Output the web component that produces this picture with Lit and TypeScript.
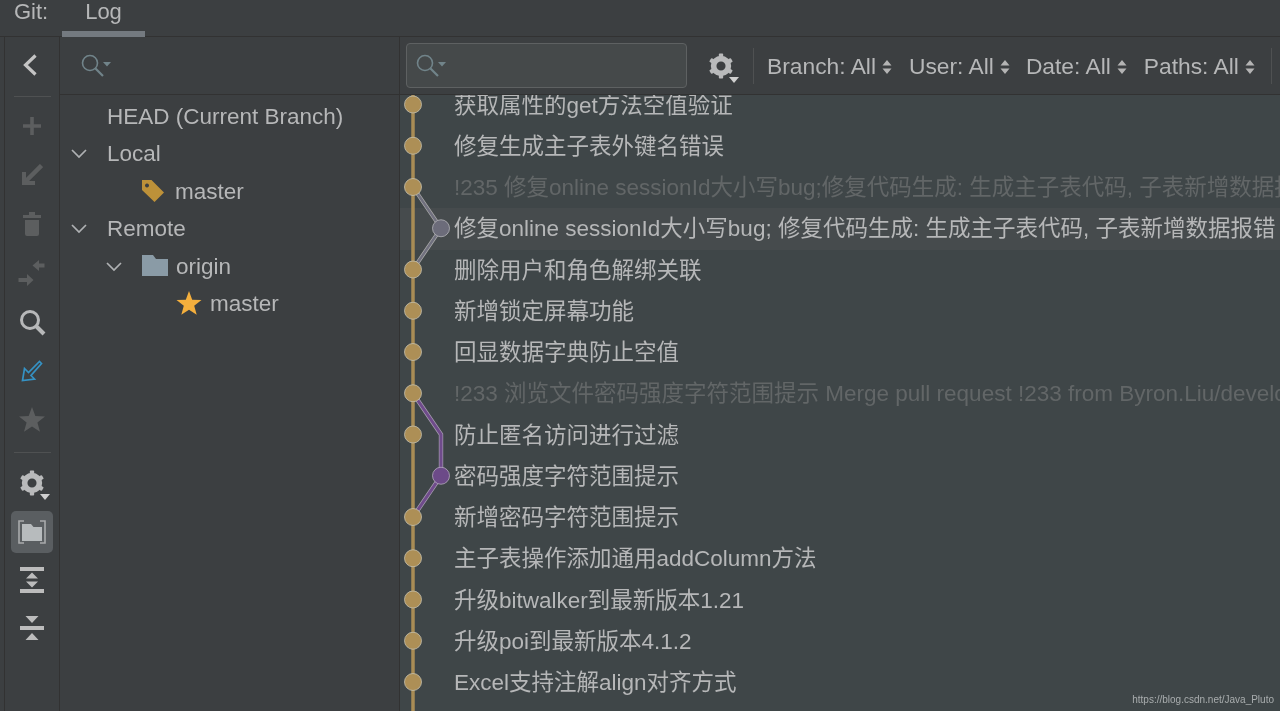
import { LitElement, html, svg, css } from 'lit';
import { customElement } from 'lit/decorators.js';

const ROW_H = 41.25;

const commits = [
  { text: '获取属性的get方法空值验证' },
  { text: '修复生成主子表外键名错误' },
  { text: '!235 修复online sessionId大小写bug;修复代码生成: 生成主子表代码, 子表新增数据报错', faded: true },
  { text: '修复online sessionId大小写bug; 修复代码生成: 生成主子表代码, 子表新增数据报错', active: true },
  { text: '删除用户和角色解绑关联' },
  { text: '新增锁定屏幕功能' },
  { text: '回显数据字典防止空值' },
  { text: '!233 浏览文件密码强度字符范围提示 Merge pull request !233 from Byron.Liu/develop', faded: true },
  { text: '防止匿名访问进行过滤' },
  { text: '密码强度字符范围提示' },
  { text: '新增密码字符范围提示' },
  { text: '主子表操作添加通用addColumn方法' },
  { text: '升级bitwalker到最新版本1.21' },
  { text: '升级poi到最新版本4.1.2' },
  { text: 'Excel支持注解align对齐方式' },
  { text: '' },
];

const gear = (fill: string) => svg`
  <g fill=${fill}>
    ${[0, 60, 120, 180, 240, 300].map(
      (a) => svg`<rect x="10" y="0.5" width="4" height="5" rx="0.8" transform="rotate(${a} 12 12)"></rect>`
    )}
    <circle cx="12" cy="12" r="6.8" fill="none" stroke=${fill} stroke-width="5.2"></circle>
  </g>`;

const searchIcon = html`
  <svg class="search-icon" width="32" height="26" viewBox="0 0 32 26">
    <circle cx="11" cy="10" r="7.5" fill="none" stroke="#71848a" stroke-width="1.6"></circle>
    <path d="M16.500 15.500l7.500 7.500" stroke="#71848a" stroke-width="2.200"></path>
    <path d="M24 9h8l-4 4.500z" fill="#71848a"></path>
  </svg>`;

const updown = html`
  <svg class="updown" width="10" height="16" viewBox="0 0 10 16">
    <path d="M5 1l4.500 5.500h-9zM5 15L.5 9.500h9z" fill="#b4b4b4"></path>
  </svg>`;

const chevron = html`
  <svg class="chevron" width="16" height="10" viewBox="0 0 16 10">
    <path d="M1 1l7 7 7-7" fill="none" stroke="#afb1b3" stroke-width="1.700"></path>
  </svg>`;

const starPath = 'M13 0l3.200 8.700 9.300.4-7.300 5.700 2.500 9L13 18.700 5.300 23.800l2.500-9L.5 9.100l9.300-.4z';

const toolIcons = [
  html`<svg width="22" height="22" viewBox="0 0 22 22"><path d="M14.500 1.500L4.500 11l10 9.500" fill="none" stroke="#c4c4c4" stroke-width="3.200"></path></svg>`,
  null,
  html`<svg width="22" height="22" viewBox="0 0 22 22"><path d="M11 2v18M2 11h18" stroke="#5c5e5f" stroke-width="3.600"></path></svg>`,
  html`<svg width="22" height="22" viewBox="0 0 22 22"><path d="M20.500 1.500L4 18" stroke="#5c5e5f" stroke-width="4.500"></path><path d="M1 8h4v9h9v4H1z" fill="#5c5e5f"></path></svg>`,
  html`<svg width="22" height="26" viewBox="0 0 22 26"><path d="M2 4h18v3H2zM8 1h6v3H8zM4 9h14v14a2 2 0 0 1-2 2H6a2 2 0 0 1-2-2z" fill="#5c5e5f"></path></svg>`,
  html`<svg width="28" height="28" viewBox="0 0 28 28"><path d="M14.500 6.500L21 1v3.500h5.500v4H21V12zM15.500 21L9 15v4H.5v4H9v4z" fill="#5c5e5f"></path></svg>`,
  html`<svg width="28" height="28" viewBox="0 0 28 28"><circle cx="12" cy="12" r="8.500" fill="none" stroke="#b7b8b9" stroke-width="3"></circle><path d="M18 18l8 8" stroke="#b7b8b9" stroke-width="4"></path></svg>`,
  html`<svg width="22" height="22" viewBox="0 0 22 22"><path d="M20.500 3.500l-2-2L7.500 12.500 3.500 8.500 1.500 20.500l12-1.500-3.500-3.500z" fill="none" stroke="#3592c4" stroke-width="1.700"></path></svg>`,
  html`<svg width="28" height="26" viewBox="0 0 26 25"><path d=${starPath} fill="#5c5e5f"></path></svg>`,
];

@customElement('app-root')
export class AppRoot extends LitElement {
  static override styles = css`
    :host {
      display: block;
      width: 1280px;
      height: 711px;
      overflow: hidden;
      position: relative;
      background: #3c3f41;
      color: #b6b7b8;
      font-family: 'Liberation Sans', 'Noto Sans CJK SC', sans-serif;
      font-size: 22.5px;
      filter: blur(0.3px);
    }
    .tabs {
      height: 37px;
      box-sizing: border-box;
      display: flex;
      align-items: flex-start;
      padding-left: 14px;
      border-bottom: 1px solid #323232;
    }
    .tabs .title {
      line-height: 24px;
      width: 48px;
      font-size: 22px;
    }
    .tabs .tab {
      width: 83px;
      height: 37px;
      box-sizing: border-box;
      text-align: center;
      line-height: 24px;
      font-size: 22px;
      border-bottom: 6px solid #747a80;
    }
    .body {
      display: flex;
      height: 674px;
      margin-left: 4px;
      border-left: 1px solid #323232;
    }
    .tools {
      width: 55px;
      flex: none;
      box-sizing: border-box;
      border-right: 1px solid #323232;
      display: flex;
      flex-direction: column;
      align-items: center;
      padding-top: 3px;
    }
    .tool {
      height: 49px;
      flex: none;
      display: flex;
      align-items: center;
      justify-content: center;
    }
    .tool.tight {
      height: 48.500px;
    }
    .sep {
      width: 37px;
      height: 1px;
      flex: none;
      background: #4f5152;
      margin: 7px 0 4px;
    }
    .sep.low {
      margin: 8px 0 5px;
    }
    .tool.on span {
      width: 42px;
      height: 42px;
      margin-top: 1px;
      border-radius: 5px;
      background: #5a5e61;
      display: flex;
      align-items: center;
      justify-content: center;
    }
    .gear-wrap {
      position: relative;
      display: flex;
    }
    .caret {
      position: absolute;
      right: -5px;
      bottom: -4px;
      width: 0;
      height: 0;
      border-left: 5.500px solid transparent;
      border-right: 5.500px solid transparent;
      border-top: 6px solid #d0d0d0;
    }
    .branches {
      width: 340px;
      flex: none;
      box-sizing: border-box;
      border-right: 1px solid #323232;
    }
    .search-row {
      height: 58px;
      box-sizing: border-box;
      border-bottom: 1px solid #323232;
      display: flex;
      align-items: center;
      padding-left: 19px;
    }
    .tree {
      padding-top: 3px;
    }
    .node {
      height: 37.500px;
      display: flex;
      align-items: center;
    }
    .node svg.lift {
      margin-top: -2px;
    }
    .slot {
      width: 16px;
      flex: none;
      display: flex;
      justify-content: center;
    }
    .lvl0 { padding-left: 11px; gap: 20px; }
    .lvl1 { padding-left: 46px; }
    .lvl2 { padding-left: 81px; gap: 10px; }
    .lvl3 { padding-left: 116px; gap: 8px; }
    .folder {
      margin: 0 8px 0 20px;
    }
    .log {
      flex: 1;
      min-width: 0;
      display: flex;
      flex-direction: column;
      position: relative;
    }
    .toolbar {
      height: 58px;
      flex: none;
      box-sizing: border-box;
      border-bottom: 1px solid #323232;
      display: flex;
      align-items: center;
      background: #3c3f41;
      position: relative;
      z-index: 2;
      padding-left: 6px;
      white-space: nowrap;
    }
    .search-box {
      width: 281px;
      height: 45px;
      box-sizing: border-box;
      flex: none;
      border: 1.500px solid #5e6162;
      border-radius: 4px;
      background: #45494a;
      display: flex;
      align-items: center;
      padding-left: 7px;
    }
    .toolbar .gear-wrap {
      margin: 0 19px 0 21px;
    }
    .divider {
      width: 1px;
      height: 36px;
      background: #4f5152;
      flex: none;
    }
    .filter {
      display: flex;
      align-items: center;
      gap: 6px;
      flex: none;
      font-size: 22.800px;
      margin-left: 17px;
      padding-top: 2px;
    }
    .filter.first { margin-left: 13px; }
    .filter.near { margin-left: 16px; }
    .divider.end { margin-left: 16px; }
    .table {
      flex: 1;
      min-height: 0;
      background: #3f4648;
      position: relative;
      overflow: hidden;
    }
    .rows {
      margin-top: -10.500px;
    }
    .row {
      height: 41.250px;
      line-height: 41.250px;
      padding-left: 54px;
      white-space: nowrap;
      overflow: hidden;
    }
    .row.faded { color: #626667; }
    .row.active { background: #464b4d; }
    .graph {
      position: absolute;
      left: 0;
      top: 0;
    }
    .mark {
      position: absolute;
      right: 6px;
      bottom: 6px;
      font-size: 10px;
      color: #a9adae;
    }
  `;

  private renderGraph() {
    const y = (i: number) => i * ROW_H + 9.5;
    const x0 = 13;
    const x1 = 41;
    const dots = commits.slice(0, 15).map((_, i) => {
      if (i === 3 || i === 9) return '';
      return svg`<circle cx=${x0} cy=${y(i)} r="8.500" fill="#ad8f56" stroke="#c5c0ad" stroke-width="0.800"></circle>`;
    });
    const grayPts = `${x0},${y(2)} ${x1},${y(3)} ${x0},${y(4)}`;
    const purplePts = `${x0},${y(7)} ${x1},${y(8)} ${x1},${y(9)} ${x0},${y(10)}`;
    return svg`
      <svg class="graph" width="60" height="616" viewBox="0 0 60 616">
        <path d="M${x0} 0V616" stroke="#a98c55" stroke-width="3.500"></path>
        <polyline points=${grayPts} fill="none" stroke="#a8a8a8" stroke-width="4"></polyline>
        <polyline points=${grayPts} fill="none" stroke="#70707e" stroke-width="2.400"></polyline>
        <polyline points=${purplePts} fill="none" stroke="#a69db0" stroke-width="4.400"></polyline>
        <polyline points=${purplePts} fill="none" stroke="#6f4b8b" stroke-width="3"></polyline>
        ${dots}
        <circle cx=${x1} cy=${y(3)} r="8.500" fill="#6c6c7a" stroke="#b4b4b8" stroke-width="0.800"></circle>
        <circle cx=${x1} cy=${y(9)} r="8.500" fill="#6c4a88" stroke="#b4aabc" stroke-width="0.800"></circle>
      </svg>`;
  }

  override render() {
    return html`
      <div class="tabs">
        <div class="title">Git:</div>
        <div class="tab">Log</div>
      </div>
      <div class="body">
        <div class="tools">
          ${toolIcons.map((icon, i) =>
            icon
              ? html`<div class="tool">${icon}</div>`
              : i === 1
                ? html`<div class="sep"></div>`
                : ''
          )}
          <div class="sep low"></div>
          <div class="tool">
            <span class="gear-wrap">
              <svg width="26" height="26" viewBox="0 0 24 24">${gear('#b9babb')}</svg>
              <i class="caret"></i>
            </span>
          </div>
          <div class="tool tight on">
            <span>
              <svg width="28" height="24" viewBox="0 0 28 24">
                <path d="M6 1H1v22h5M22 1h5v22h-5" fill="none" stroke="#a9abac" stroke-width="1.600"></path>
                <path d="M4 4h9l2.500 3H24v14H4z" fill="#b7bbbd"></path>
              </svg>
            </span>
          </div>
          <div class="tool tight">
            <svg width="24" height="26" viewBox="0 0 24 26">
              <path d="M0 0h24v4H0zM0 22h24v4H0z" fill="#bcbcbc"></path>
              <path d="M12 5.500l6 6H6zM12 20.500l-6-6h12z" fill="#bcbcbc"></path>
            </svg>
          </div>
          <div class="tool tight">
            <svg width="24" height="24" viewBox="0 0 24 24">
              <path d="M0 10h24v4H0zM5.500 0h13L12 7zM5.500 24h13L12 17z" fill="#bcbcbc"></path>
            </svg>
          </div>
        </div>

        <div class="branches">
          <div class="search-row">${searchIcon}</div>
          <div class="tree">
            <div class="node lvl0"><span class="slot"></span>HEAD (Current Branch)</div>
            <div class="node lvl0"><span class="slot">${chevron}</span>Local</div>
            <div class="node lvl2">
              <svg class="lift" width="24" height="24" viewBox="0 0 24 24">
                <path fill-rule="evenodd" d="M1 1h9.500L23 13.500 13.500 23 1 11zM6 4.500a2 2 0 1 0 .01 0z" fill="#bd9139"></path>
              </svg>
              master
            </div>
            <div class="node lvl0"><span class="slot">${chevron}</span>Remote</div>
            <div class="node lvl1">
              <span class="slot">${chevron}</span>
              <svg class="folder lift" width="26" height="21" viewBox="0 0 26 21">
                <path d="M0 0h11l3 4h12v17H0z" fill="#8a9ba6"></path>
              </svg>
              origin
            </div>
            <div class="node lvl3">
              <svg class="lift" width="26" height="25" viewBox="0 0 26 25"><path d=${starPath} fill="#f4af3d"></path></svg>
              master
            </div>
          </div>
        </div>

        <div class="log">
          <div class="toolbar">
            <div class="search-box">${searchIcon}</div>
            <span class="gear-wrap">
              <svg width="26" height="26" viewBox="0 0 24 24">${gear('#b9babb')}</svg>
              <i class="caret"></i>
            </span>
            <div class="divider"></div>
            <div class="filter first">Branch: All ${updown}</div>
            <div class="filter">User: All ${updown}</div>
            <div class="filter near">Date: All ${updown}</div>
            <div class="filter">Paths: All ${updown}</div>
            <div class="divider end"></div>
          </div>
          <div class="table">
            <div class="rows">
              ${commits.map(
                (c) => html`<div class="row ${c.faded ? 'faded' : ''} ${c.active ? 'active' : ''}">${c.text}</div>`
              )}
            </div>
            ${this.renderGraph()}
          </div>
        </div>
      </div>
      <div class="mark">https://blog.csdn.net/Java_Pluto</div>
    `;
  }
}

declare global {
  interface HTMLElementTagNameMap {
    'app-root': AppRoot;
  }
}
